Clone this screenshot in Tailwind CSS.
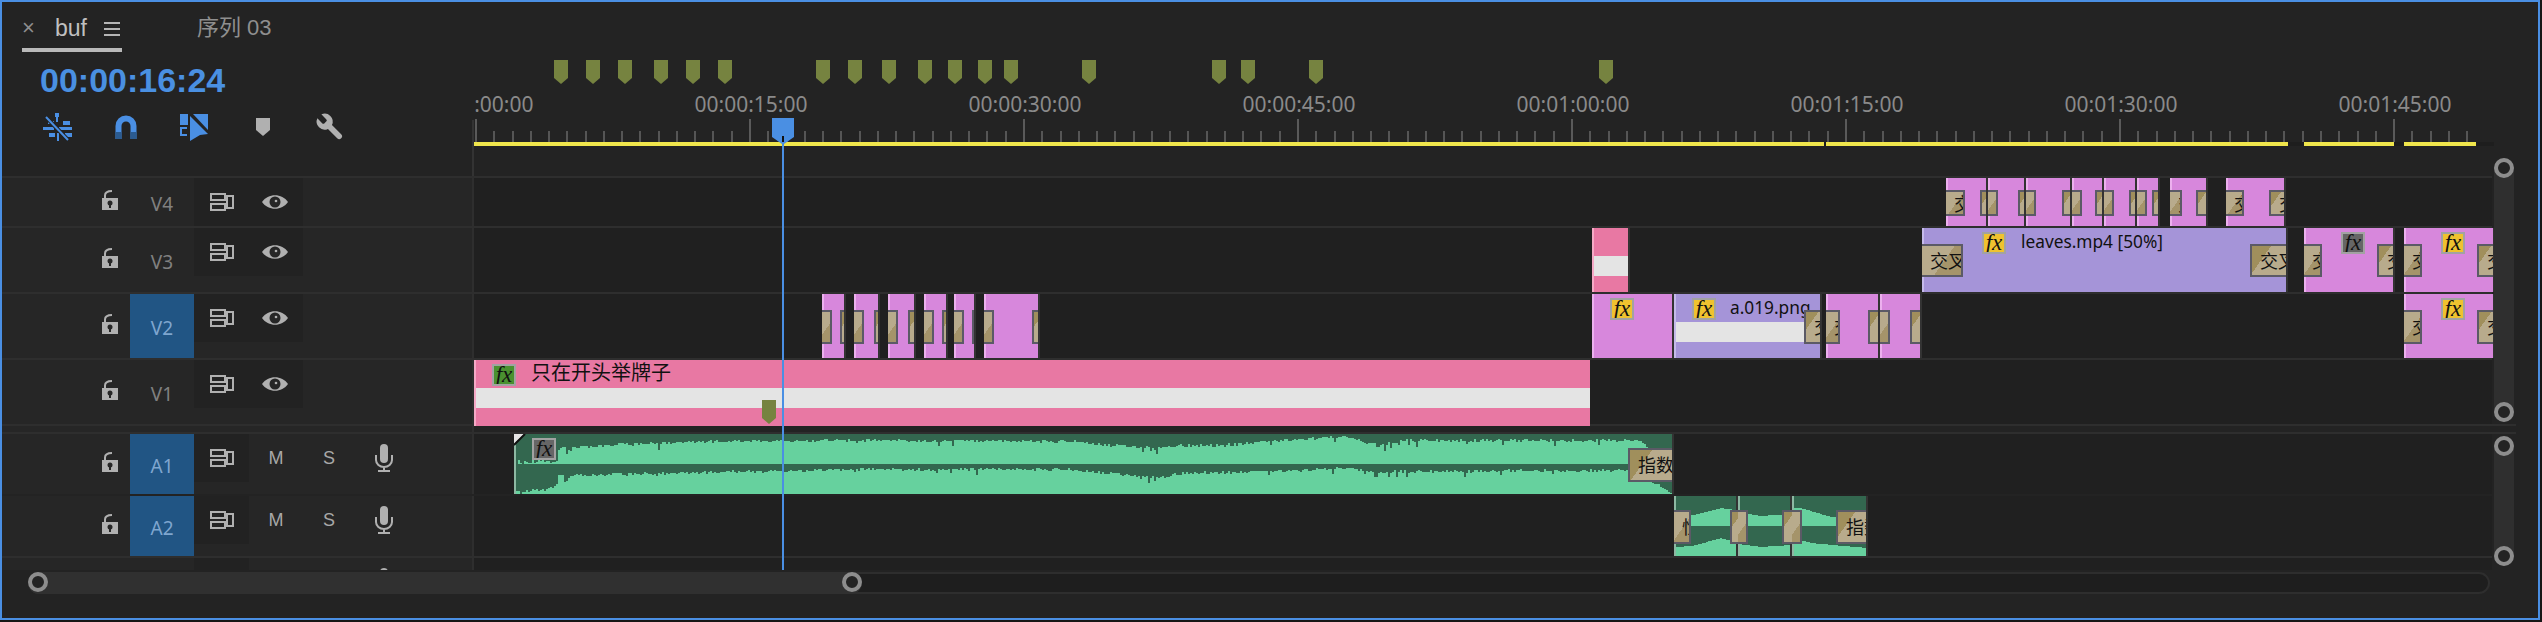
<!DOCTYPE html>
<html lang="en">
<head>
  <meta charset="UTF-8" />
  <title>Timeline - buf</title>
  <script src="https://cdn.jsdelivr.net/npm/@tailwindcss/browser@4"></script>
</head>
<body class="bg-[#161616] w-[2542px] h-[622px] overflow-hidden font-['Noto_Sans','Noto_Sans_CJK_SC',sans-serif]">

  <div class="relative w-[2540px] h-[620px] border-2 border-[#4a8fe3] bg-[#232323] overflow-hidden">

    <!-- top: tabs, timecode, tools and the ruler -->
    <div class="flex h-[174px]">
      <div class="w-[472px] shrink-0 font-['Liberation_Sans','Noto_Sans_CJK_SC',sans-serif]">
        <div class="flex h-[50px] pl-[20px]">
          <div class="flex w-[100px] h-[50px] items-start border-b-4 border-[#b9b9b9]">
            <span class="w-[33px] pt-[12px] text-[#8e8e8e] text-[22px] leading-[28px]">×</span>
            <span class="w-[49px] pt-[11px] text-[#c0c0c0] text-[23px] leading-[30px]">buf</span>
            <svg class="mt-[20px]" width="16" height="14" viewBox="0 0 16 14"><path d="M0 1h16M0 7h16M0 13h16" stroke="#b5b5b5" stroke-width="2"/></svg>
          </div>
          <span class="ml-[75px] pt-[11px] text-[#8f8f8f] text-[22px] leading-[30px] whitespace-nowrap">序列 03</span>
        </div>
        <div class="pl-[38px] pt-[6px] h-[52px] text-[#4a90e2] text-[34px] leading-[44px] font-bold">00:00:16:24</div>
        <div class="flex items-center h-[30px] mt-[8px] pl-[41px]">
          <svg width="29" height="29" viewBox="0 0 29 29" fill="#4a8fe3">
            <rect x="12" y="0" width="4" height="4"/><rect x="13" y="3" width="2" height="6"/>
            <rect x="20" y="8" width="7" height="4"/><rect x="5" y="8" width="6" height="3"/>
            <rect x="0" y="14" width="11" height="3"/><rect x="16" y="14" width="13" height="3"/>
            <rect x="6" y="20" width="6" height="4"/><rect x="22" y="20" width="7" height="4"/>
            <rect x="14" y="20" width="2" height="8"/>
            <path d="M3 4l22 23" stroke="#232323" stroke-width="4"/><path d="M3 4l22 23" stroke="#4a8fe3" stroke-width="2"/>
          </svg>
          <svg class="ml-[43px]" width="22" height="24" viewBox="0 0 22 24" fill="none">
            <path d="M3.5 24V11a7.5 7.5 0 0 1 15 0V24" stroke="#4a8fe3" stroke-width="6"/>
            <path d="M3.5 24V17M18.500 24V17" stroke="#2b5b90" stroke-width="6"/>
          </svg>
          <svg class="ml-[43px]" width="28" height="28" viewBox="0 0 28 28" fill="#4a8fe3">
            <rect x="0" y="1" width="8" height="11"/>
            <path d="M7 15H1v7h6" fill="none" stroke="#4a8fe3" stroke-width="2"/>
            <path d="M13 1h15v16z"/><path d="M10 3l18 18-8 1-10 6z"/>
          </svg>
          <svg class="ml-[48px]" width="14" height="18" viewBox="0 0 14 18" fill="#b0b0b0"><path d="M0 0h14v12l-7 6-7-6z"/></svg>
          <svg class="ml-[44px]" width="32" height="32" viewBox="0 0 24 24" fill="#b0b0b0"><g transform="translate(24 0) scale(-1 1)"><path d="M14.700 6.300a1 1 0 0 0 0 1.400l1.600 1.600a1 1 0 0 0 1.400 0l3.770-3.770a6 6 0 0 1-7.940 7.940l-6.910 6.910a2.120 2.120 0 0 1-3-3l6.910-6.910a6 6 0 0 1 7.940-7.940l-3.760 3.760z"/></g></svg>
        </div>
      </div>
      <div id="ruler" class="relative w-[2020px] overflow-hidden"></div>
    </div>
    <div class="absolute left-[470px] top-[118px] w-[2px] h-[56px] bg-[#333333]"></div>

    <!-- tracks -->
    <div id="rows" class="text-[#808080]"></div>

    <!-- horizontal zoom bar -->
    <div class="relative w-[2462px] h-[22px] ml-[26px] mt-[2px] rounded-full bg-[#1e1e1e] border-2 border-[#2e2e2e]">
      <div class="absolute -left-[2px] -top-[2px] w-[834px] h-[22px] rounded-full bg-[#303030]"></div>
      <div class="absolute -left-[2px] -top-[2px] size-[20px] rounded-full border-4 border-[#8d8d8d] bg-[#232323]"></div>
      <div class="absolute left-[812px] -top-[2px] size-[20px] rounded-full border-4 border-[#8d8d8d] bg-[#232323]"></div>
    </div>

    <!-- vertical zoom bars -->
    <div class="absolute left-[2492px] top-[156px] w-[20px] h-[264px] rounded-full bg-[#2f2f2f]">
      <div class="absolute left-0 top-0 size-[20px] rounded-full border-4 border-[#8d8d8d] bg-[#232323]"></div>
      <div class="absolute left-0 bottom-0 size-[20px] rounded-full border-4 border-[#8d8d8d] bg-[#232323]"></div>
    </div>
    <div class="absolute left-[2492px] top-[434px] w-[20px] h-[130px] rounded-full bg-[#2f2f2f]">
      <div class="absolute left-0 top-0 size-[20px] rounded-full border-4 border-[#8d8d8d] bg-[#232323]"></div>
      <div class="absolute left-0 bottom-0 size-[20px] rounded-full border-4 border-[#8d8d8d] bg-[#232323]"></div>
    </div>

    <!-- playhead -->
    <svg class="absolute left-[770px] top-[116px]" width="22" height="26" viewBox="0 0 22 26"><path d="M0 0h22v19l-10 7h-2l-10-7z" fill="#4a8fe3"/><rect x="10" y="18" width="2" height="8" fill="#111111"/></svg>
    <div class="absolute left-[780px] top-[140px] w-[2px] h-[428px] bg-[#4a8fe3]"></div>
  </div>

  <script>
    const lockIcon = `<svg class="mb-[4px]" width="16" height="20" viewBox="0 0 16 20"><path d="M3 9V5.500C3 2.500 6 1 10 1" fill="none" stroke="#b0b0b0" stroke-width="2"/><rect y="8" width="16" height="12" fill="#b0b0b0"/><circle cx="8" cy="13" r="2.500" fill="#262626"/><rect x="7" y="13" width="2" height="5" fill="#262626"/></svg>`;
    const syncIcon = `<svg width="24" height="18" viewBox="0 0 24 18" fill="none" stroke="#b0b0b0" stroke-width="2"><rect x="1" y="1" width="14" height="6"/><rect x="1" y="11" width="14" height="6"/><path d="M15 3h8v12h-8M17 4v10" /></svg>`;
    const eyeIcon = `<svg width="26" height="16" viewBox="0 0 26 16"><path d="M0 8C6-1 20-1 26 8 20 17 6 17 0 8z" fill="#b0b0b0"/><circle cx="13" cy="8" r="5.500" fill="#262626"/><circle cx="14" cy="7" r="1.300" fill="#b0b0b0"/></svg>`;
    const micIcon = `<svg width="18" height="28" viewBox="0 0 18 28" fill="none"><rect x="5" y="0" width="8" height="19" rx="4" fill="#b0b0b0"/><path d="M1 11v5a8 7 0 0 0 16 0v-5M9 23v4M3 27h12" stroke="#b0b0b0" stroke-width="2"/></svg>`;
    const markerIcon = `<svg width="14" height="24" viewBox="0 0 14 24" fill="#768340"><path d="M0 0h14v18l-7 6-7-6z"/></svg>`;

    function header(name, target, audio) {
      const cell = target
        ? `<div class="flex items-center justify-center w-[64px] h-full pt-[4px] bg-[#215584] text-[#7fa6cf] text-[19px]">${name}</div>`
        : `<div class="flex items-center justify-center w-[64px] h-full pt-[4px] text-[19px]">${name}</div>`;
      const buttons = audio
        ? `<div class="flex items-center w-[55px] h-full pl-[16px] bg-[#222222]">${syncIcon}</div>
           <span class="w-[52px] ml-[1px] text-center text-[#a8a8a8] text-[18px] font-['Liberation_Sans']">M</span>
           <span class="w-[52px] ml-[1px] text-center text-[#a8a8a8] text-[18px] font-['Liberation_Sans']">S</span>
           <span class="ml-[20px]">${micIcon}</span>`
        : `<div class="flex items-center w-[109px] h-full pl-[16px] gap-[28px] bg-[#222222]">${syncIcon}${eyeIcon}</div>`;
      return `<div class="flex items-center w-[470px] shrink-0 pl-[100px] bg-[#262626]">
        ${lockIcon}<div class="w-[12px]"></div>${cell}
        <div class="flex items-center self-start h-[48px]">${buttons}</div>
      </div>`;
    }

    const rowDefs = [
      ["V4", "h-[50px]", false, false],
      ["V3", "h-[66px]", false, false],
      ["V2", "h-[66px]", true, false],
      ["V1", "h-[66px]", false, false],
    ];
    let html = "";
    for (const [name, h, target, audio] of rowDefs) {
      html += `<div class="flex w-[2490px] ${h} border-t-2 border-[#2e2e2e]">${header(name, target, audio)}<div id="t${name}" class="relative flex-1 border-l-2 border-[#2e2e2e] bg-[#202020]"></div></div>`;
    }
    html += `<div class="flex w-[2514px] h-[8px] border-t-2 border-[#2e2e2e]"><div class="w-[470px] bg-[#262626]"></div><div class="flex-1 border-l-2 border-[#2e2e2e] bg-[#232323]"></div></div>`;
    html += `<div class="flex w-[2514px] h-[2px] bg-[#2e2e2e]"></div>`;
    for (const name of ["A1", "A2"]) {
      html += `<div class="flex w-[2490px] h-[60px] ${name === "A2" ? "mt-[2px]" : ""}">${header(name, true, true)}<div id="t${name}" class="relative flex-1 border-l-2 border-[#2e2e2e] bg-[#202020]"></div></div>`;
    }
    html += `<div class="flex w-[2490px] h-[14px] border-t-2 border-[#2e2e2e] overflow-hidden"><div class="flex w-[470px] shrink-0 pl-[192px] bg-[#262626]"><div class="w-[55px] h-full bg-[#222222]"></div><div class="ml-[126px] mt-[10px]">${micIcon}</div></div><div class="flex-1 border-l-2 border-[#2e2e2e] bg-[#202020]"></div></div>`;
    document.getElementById("rows").innerHTML = html;

    // clips are placed by their timeline position, x values are screen px
    const X0 = 474;
    const tones = {
      pink: ["bg-[#d787dc]", "bg-[#ecb0ee]"],
      rose: ["bg-[#e878a3]", "bg-[#f5a9c6]"],
      violet: ["bg-[#a594d8]", "bg-[#c5baea]"],
    };
    const fxTones = {
      gold: "bg-[#efc22f]",
      green: "bg-[#4a9130]",
      gray: "bg-[#666666]",
    };
    const boxLayout = {
      V4: "top-[12px] h-[26px] leading-[22px]",
      V3: "top-[16px] h-[33px] leading-[28px]",
      V2: "top-[16px] h-[34px] leading-[28px]",
      A1: "top-[14px] h-[34px] leading-[28px]",
      A2: "top-[14px] h-[34px] leading-[28px]",
    };

    function fxBadge(left, tone) {
      return `<div class="absolute top-[4px] w-[24px] h-[22px] border-2 border-[#a2a2a2] ${fxTones[tone]} text-[#111111] text-[23px] leading-[17px] italic text-center overflow-hidden font-['Liberation_Serif']" style="left:${left}px">fx</div>`;
    }

    function tranBox(track, left, width, side, label) {
      const edge = side === "l" ? "border-y-2 border-r-2" : "border-y-2 border-l-2";
      const fill = side === "l"
        ? "bg-[linear-gradient(125deg,#b8ab8c_55%,#a5946a_55%)]"
        : "bg-[linear-gradient(125deg,#a08f5c_35%,#b8ab8c_35%)]";
      // slivers this narrow show no readable part of the label
      const text = width < 12 ? "" : label;
      return `<div class="absolute ${boxLayout[track]} ${edge} border-[#5b5a66] ${fill} overflow-hidden whitespace-nowrap pl-[8px] text-[#111111] text-[18px] font-['Noto_Sans_CJK_SC']" style="left:${left}px;width:${width}px">${text}</div>`;
    }

    function clip(track, x0, x1, tone, o = {}) {
      const w = x1 - x0;
      const label = o.text || "交叉";
      let inner = "";
      if (o.band) inner += `<div class="absolute left-0 bg-[#e4e4e4] ${o.bandClass}" style="width:${o.band - x0}px"></div>`;
      inner += `<div class="absolute left-0 top-0 bottom-0 w-[2px] ${tones[tone][1]}"></div>`;
      if (o.fx) inner += fxBadge(o.fx[0] - x0, o.fx[1]);
      if (o.name) inner += `<div class="absolute top-0 h-[28px] text-[#111111] text-[17.300px] leading-[28px] whitespace-nowrap" style="left:${o.name[0] - x0}px">${o.name[1]}</div>`;
      if (o.l) inner += tranBox(track, 0, o.l - x0, "l", label);
      if (o.r) inner += tranBox(track, o.r - x0, x1 - o.r, "r", label);
      return `<div class="absolute top-0 h-full overflow-hidden ${tones[tone][0]}" style="left:${x0 - X0}px;width:${w}px">${inner}</div>
        <div class="absolute top-0 h-full w-[2px] bg-[#333333]" style="left:${x1 - X0}px"></div>`;
    }

    const put = (id, s) => document.getElementById(id).insertAdjacentHTML("beforeend", s);

    // V4
    [[1946,1986,1965,1980],[1988,2024,1997,2018],[2026,2070,2036,2062],[2072,2102,2080,2095],
     [2104,2135,2114,2129],[2137,2158,2146,2152],[2170,2206,2182,2196],[2226,2284,2244,2269]]
      .forEach(c => put("tV4", clip("V4", c[0], c[1], "pink", { l: c[2], r: c[3] })));

    // V3
    put("tV3", clip("V3", 1592, 1628, "rose", { band: 1628, bandClass: "top-[28px] h-[20px]" }));
    put("tV3", clip("V3", 1922, 2286, "violet", { l: 1963, r: 2250, fx: [1982, "gold"], name: [2021, "leaves.mp4 [50%]"] }));
    put("tV3", clip("V3", 2304, 2393, "pink", { l: 2322, r: 2377, fx: [2341, "gray"] }));
    put("tV3", clip("V3", 2404, 2493, "pink", { l: 2422, r: 2477, fx: [2441, "gold"] }));

    // V2
    [[822,844,828,840],[854,878,862,874],[888,914,894,908],[924,946,930,942],[954,974,960,972],[984,1038,992,1032]]
      .forEach(c => put("tV2", clip("V2", c[0], c[1], "pink", { l: c[2], r: c[3] })));
    put("tV2", clip("V2", 1592, 1672, "pink", { fx: [1610, "gold"] }));
    put("tV2", clip("V2", 1674, 1820, "violet", { r: 1804, fx: [1692, "gold"], name: [1730, "a.019.png"], band: 1804, bandClass: "top-[28px] h-[20px]" }));
    put("tV2", clip("V2", 1826, 1878, "pink", { l: 1840, r: 1868 }));
    put("tV2", clip("V2", 1880, 1920, "pink", { l: 1890, r: 1910 }));
    put("tV2", clip("V2", 2404, 2493, "pink", { l: 2422, r: 2477, fx: [2441, "gold"] }));

    // V1
    put("tV1", `<div class="absolute left-0 top-0 w-[1116px] h-[66px] bg-[#e878a3] overflow-hidden">
      <div class="absolute left-0 top-[28px] w-full h-[20px] bg-[#e4e4e4]"></div>
      <div class="absolute left-0 top-0 w-[2px] h-full bg-[#f5a9c6]"></div>
      ${fxBadge(18, "green")}
      <div class="absolute left-[57px] -top-[1px] h-[26px] text-[#111111] text-[20px] leading-[26px] whitespace-nowrap font-['Noto_Sans_CJK_SC']">只在开头举牌子</div>
      <div class="absolute left-[288px] top-[40px]">${markerIcon}</div>
    </div>`);

    // audio: waveform from an envelope, with a bit of fixed noise
    const rnd = n => { const s = Math.sin(n * 12.9898) * 43758.5453; return s - Math.floor(s); };
    function env(points, x) {
      for (let i = 1; i < points.length; i++) {
        if (x <= points[i][0]) {
          const [a, ya] = points[i - 1], [b, yb] = points[i];
          return ya + (yb - ya) * (x - a) / (b - a);
        }
      }
      return points[points.length - 1][1];
    }
    function wave(x0, x1, top, bottom, points, seed, noisy) {
      let d = `M0 ${bottom - top}`;
      for (let x = x0; x < x1; x += 2) {
        let y = env(points, x) + (noisy ? rnd(x + seed) * 3 - 2 : 0);
        if (noisy && rnd(x * 3 + seed) > ((x > 1360 && x < 1430) ? 0.82 : 0.96)) y += 2 + rnd(x) * 4;
        y = Math.min(y, bottom) - top;
        d += `H${x - x0}V${y.toFixed(0)}`;
      }
      return d + `H${x1 - x0}V${bottom - top}Z`;
    }
    function audioClip(track, x0, x1, rowTop, mid, upper, lower, noisy) {
      const d = wave(x0, x1, rowTop, mid, upper, 1, noisy) + " " + wave(x0, x1, rowTop, rowTop + 60, lower, 7, noisy);
      return `<svg class="absolute top-0 bg-[#33674f]" style="left:${x0 - X0}px" width="${x1 - x0}" height="60" viewBox="0 0 ${x1 - x0} 60"><path d="${d}" fill="#66d19e"/><rect width="2" height="60" fill="#8db8a3"/></svg>
        <div class="absolute top-0 h-full w-[2px] bg-[#333333]" style="left:${x1 - X0}px"></div>`;
    }

    put("tA1", audioClip("A1", 514, 1672, 434, 464,
      [[514,462],[557,462],[558,449],[600,446],[700,442],[860,441],[1080,442],[1100,445],[1158,449],[1170,446],[1220,446],[1280,441],[1349,437],[1365,443],[1385,445],[1400,441],[1640,441],[1646,448],[1672,464]],
      [[514,492],[540,491],[556,486],[558,476],[700,473],[860,470],[1070,470],[1100,473],[1130,476],[1158,478],[1180,474],[1300,471],[1349,468],[1372,473],[1385,472],[1600,471],[1640,470],[1650,482],[1672,494]], true));
    put("tA1", `<svg class="absolute left-[40px] top-0" width="12" height="12" viewBox="0 0 12 12"><path d="M0 0h10L0 10z" fill="#e6e6e6"/><path d="M11 0L0 11" stroke="#111111" stroke-width="2"/></svg>`);
    put("tA1", `<div class="absolute left-[58px] top-[4px] w-[24px] h-[22px] border-2 border-[#a2a2a2] bg-[#666666] text-[#111111] text-[23px] leading-[17px] italic text-center overflow-hidden font-['Liberation_Serif']">fx</div>`);
    put("tA1", tranBox("A1", 1628 - X0, 44, "r", "指数"));

    put("tA2", audioClip("A2", 1674, 1736, 496, 526, [[1674,516],[1692,515],[1720,508],[1736,510]], [[1674,547],[1692,546],[1720,538],[1736,542]], false));
    put("tA2", audioClip("A2", 1738, 1790, 496, 526, [[1738,512],[1760,516],[1790,514]], [[1738,544],[1760,547],[1790,545]], false));
    put("tA2", audioClip("A2", 1792, 1866, 496, 526, [[1792,508],[1800,508],[1830,517],[1866,517]], [[1792,538],[1810,543],[1866,548]], false));
    put("tA2", tranBox("A2", 1674 - X0, 17, "l", "恒"));
    put("tA2", tranBox("A2", 1730 - X0, 6, "r", "恒"));
    put("tA2", tranBox("A2", 1738 - X0, 9, "l", "恒"));
    put("tA2", tranBox("A2", 1782 - X0, 8, "r", "恒"));
    put("tA2", tranBox("A2", 1792 - X0, 8, "l", "恒"));
    put("tA2", tranBox("A2", 1836 - X0, 30, "r", "指数"));

    // ruler
    let ruler = "";
    const rulerX = x => x - X0;
    ruler += `<div class="absolute left-0 top-[140px] w-[2020px] h-[4px] bg-[#1e1e1e]"></div>`;
    [[474,1824],[1826,2288],[2304,2394],[2404,2476]].forEach(([a, b]) => {
      ruler += `<div class="absolute top-[140px] h-[4px] bg-[#f0e64c]" style="left:${rulerX(a)}px;width:${b - a}px"></div>`;
    });
    for (let i = 0; 475 + i * 18.267 <= 2484; i++) {
      const x = Math.round(475 + i * 18.267);
      ruler += i % 15 === 0
        ? `<div class="absolute top-[117px] w-[2px] h-[23px] bg-[#5a5a5a]" style="left:${rulerX(x)}px"></div>`
        : `<div class="absolute top-[129px] w-[2px] h-[11px] bg-[#555555]" style="left:${rulerX(x)}px"></div>`;
    }
    const labels = [["00:00:00:00",477],["00:00:15:00",751],["00:00:30:00",1025],["00:00:45:00",1299],["00:01:00:00",1573],["00:01:15:00",1847],["00:01:30:00",2121],["00:01:45:00",2395]];
    labels.forEach(([t, c]) => {
      ruler += `<div class="absolute top-[88px] w-[120px] text-center text-[#8a8a8a] text-[21px] leading-[28px]" style="left:${rulerX(c) - 60}px">${t}</div>`;
    });
    [554,586,618,654,686,718,816,848,882,918,948,978,1004,1082,1212,1241,1309,1599].forEach(x => {
      ruler += `<div class="absolute top-[58px]" style="left:${rulerX(x)}px">${markerIcon}</div>`;
    });
    document.getElementById("ruler").innerHTML = ruler;
  </script>
</body>
</html>
